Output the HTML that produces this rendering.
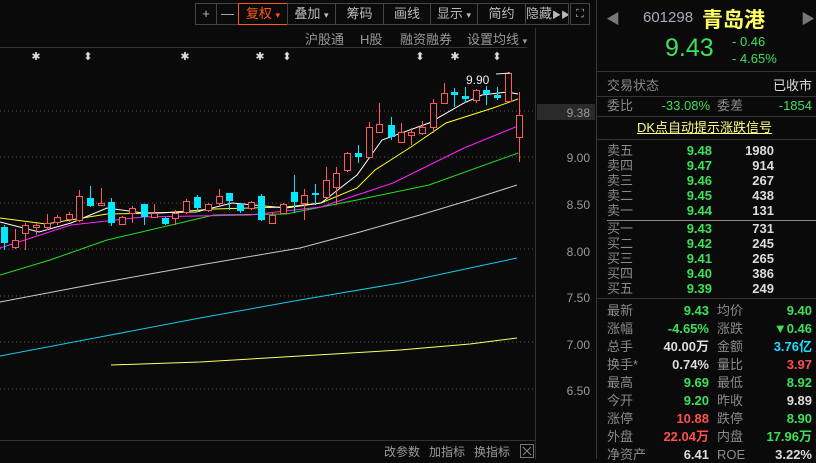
<!DOCTYPE html>
<html><head><meta charset="utf-8"><style>
*{margin:0;padding:0;box-sizing:border-box}
body{width:816px;height:459px;background:#0a0a0a;overflow:hidden;position:relative;font-family:"Liberation Sans","Noto Sans CJK SC",sans-serif;color:#bbb}
.a{position:absolute;white-space:nowrap}
.tb{position:absolute;top:3px;height:22px;border:1px solid #444;font-size:13px;color:#bbb;text-align:center;line-height:20px;white-space:nowrap;overflow:hidden}
.g{color:#3ee05a}.r{color:#ff4f4f}.w{color:#dcdcdc}.l{color:#8a8a8a}
.rp{font-size:13px;line-height:16px;height:16px}
</style></head><body>
<svg class="a" style="left:0;top:0" width="597" height="459">
<g stroke="#555" stroke-dasharray="1,3">
<line x1="0" y1="111" x2="535" y2="111"/><line x1="0" y1="157" x2="535" y2="157"/><line x1="0" y1="203" x2="535" y2="203"/><line x1="0" y1="249" x2="535" y2="249"/><line x1="0" y1="296" x2="535" y2="296"/><line x1="0" y1="342" x2="535" y2="342"/><line x1="0" y1="389" x2="535" y2="389"/>
</g>
<line x1="0" y1="47.5" x2="527" y2="47.5" stroke="#333"/>
<line x1="535.5" y1="28" x2="535.5" y2="459" stroke="#333"/>
<line x1="0" y1="440.5" x2="535" y2="440.5" stroke="#333"/>
<line x1="596.5" y1="0" x2="596.5" y2="459" stroke="#3a3a3a"/>
<rect x="537" y="104" width="58" height="16" fill="#2a2a2a"/>
<g fill="#9a9a9a" font-size="12" text-anchor="end" font-family="Liberation Sans">
<text x="590" y="117">9.38</text><text x="590" y="162">9.00</text><text x="590" y="209">8.50</text><text x="590" y="256">8.00</text><text x="590" y="302">7.50</text><text x="590" y="349">7.00</text><text x="590" y="395">6.50</text>
</g>
<g fill="#ddd" font-size="11" text-anchor="middle"><text x="36" y="60">✱</text><text x="88" y="60">⬍</text><text x="185" y="60">✱</text><text x="260" y="60">✱</text><text x="287" y="60">⬍</text><text x="420" y="60">⬍</text><text x="455" y="60">✱</text><text x="497" y="60">⬍</text></g>
<g fill="none" stroke-width="1">
<polyline stroke="#ffff6a" points="111,365 200,362 300,356 400,350 470,344 517,338"/>
<polyline stroke="#18c8e8" points="0,356 100,337 200,318 300,300 400,283 470,268 517,258"/>
<polyline stroke="#c8c8c8" points="0,302 100,283 200,265 300,248 360,232 420,215 470,200 517,185"/>
<polyline stroke="#22e022" points="0,275 50,260 107,240 214,215 286,214 357,200 429,185 518,153"/>
<polyline stroke="#ff22ff" points="0,248 71,225 143,217 250,215 321,207 393,183 464,148 518,126"/>
<polyline stroke="#ffff22" points="0,218 46,224 107,214 161,213 214,209 286,207 321,203 357,188 375,170 411,147 446,123 493,108 518,99"/>
<polyline stroke="#ffffff" points="0,222 39,232 71,223 107,208 143,213 196,212 232,203 286,208 321,203 357,175 382,140 429,123 464,103 482,95 507,92 518,94"/>
</g>
<g id="c" stroke-width="1">
</g>
<text x="466" y="84" fill="#eee" font-size="12">9.90</text>
<line x1="496" y1="74" x2="510" y2="73" stroke="#eee"/>
<g font-size="12" fill="#9a9a9a"><text x="384" y="456">改参数</text><text x="429" y="456">加指标</text><text x="474" y="456">换指标</text></g>
<rect x="520.5" y="444.5" width="13" height="13" fill="none" stroke="#777"/>
<path d="M523 447l8 8M531 447l-8 8" stroke="#888"/>
</svg>
<script>
var d=[[4,'c',227,243,225,250],[15,'r',240,247,229,249],[25,'r',225,233,223,250],[36,'r',225,227,223,235],[47,'r',223,227,214,230],[57,'r',217,222,215,225],[69,'r',214,219,212,222],[79,'r',196,220,190,222],[90,'c',198,206,186,207],[101,'r',203,205,188,205],[111,'c',202,223,198,226],[122,'r',217,224,216,225],[132,'r',208,213,206,223],[144,'c',204,217,204,225],[154,'r',213,217,204,217],[165,'c',218,224,217,225],[175,'r',213,218,210,225],[186,'r',201,212,199,214],[197,'c',197,208,195,212],[208,'r',204,210,203,212],[219,'r',196,203,189,206],[229,'c',193,201,193,210],[240,'c',204,211,203,213],[251,'r',202,208,201,210],[261,'c',196,220,194,221],[272,'r',215,223,213,224],[283,'r',204,213,203,214],[294,'c',192,202,175,213],[304,'r',195,203,189,220],[315,'c',193,195,184,205],[326,'r',180,197,167,198],[336,'r',173,187,167,205],[347,'r',153,170,152,172],[358,'c',153,157,145,163],[369,'r',127,157,122,158],[379,'r',124,132,103,133],[391,'c',125,137,117,140],[401,'r',132,142,123,143],[411,'r',132,135,128,145],[422,'r',127,133,121,135],[433,'r',103,127,99,133],[444,'r',93,103,83,104],[454,'c',92,95,88,107],[465,'c',96,99,87,103],[476,'r',90,100,89,103],[486,'c',90,94,86,105],[497,'c',95,98,87,100],[508,'r',73,101,72,102],[519,'r',115,137,92,162]];
var s='';d.forEach(function(k){var x=k[0],col=k[1]=='r'?'#ff5a5a':'#00e8ff';
s+='<line x1="'+(x+.5)+'" y1="'+k[4]+'" x2="'+(x+.5)+'" y2="'+k[5]+'" stroke="'+col+'"/>';
if(k[1]=='r')s+='<rect x="'+(x-2.5)+'" y="'+(k[2]+.5)+'" width="6" height="'+Math.max(1,k[3]-k[2])+'" fill="#0a0a0a" stroke="'+col+'"/>';
else s+='<rect x="'+(x-3)+'" y="'+k[2]+'" width="7" height="'+Math.max(2,k[3]-k[2])+'" fill="'+col+'"/>';});
document.getElementById('c').innerHTML=s;
</script>
<div class="tb" style="left:195px;width:22px">+</div>
<div class="tb" style="left:216px;width:23px">—</div>
<div class="tb" style="left:238px;width:50px;border-color:#ff5a14;color:#ff5a14">复权 <span style="font-size:9px">▾</span></div>
<div class="tb" style="left:287px;width:49px">叠加 <span style="font-size:9px">▾</span></div>
<div class="tb" style="left:335px;width:49px">筹码</div>
<div class="tb" style="left:383px;width:48px">画线</div>
<div class="tb" style="left:430px;width:48px">显示 <span style="font-size:9px">▾</span></div>
<div class="tb" style="left:477px;width:49px">简约</div>
<div class="tb" style="left:525px;width:44px">隐藏<span style="font-size:9px">▶▶</span></div>
<div class="tb" style="left:570px;width:20px;font-size:11px">⛶</div>
<div class="a" style="left:305px;top:29px;font-size:13px;color:#999">沪股通</div>
<div class="a" style="left:360px;top:29px;font-size:13px;color:#999">H股</div>
<div class="a" style="left:400px;top:29px;font-size:13px;color:#999">融资融券</div>
<div class="a" style="left:467px;top:29px;font-size:13px;color:#999">设置均线 <span style="font-size:9px">▾</span></div>
<div class="a" style="left:606px;top:9px;font-size:14px;color:#777">◀</div>
<div class="a" style="left:801px;top:9px;font-size:14px;color:#777">▶</div>
<div class="a" style="left:643px;top:9px;font-size:15px;color:#aab">601298</div>
<div class="a" style="left:702px;top:4px;font-size:21px;color:#ffff66;font-weight:bold">青岛港</div>
<div class="a g" style="left:665px;top:34px;font-size:25px">9.43</div>
<div class="a g" style="left:732px;top:34px;font-size:13px">- 0.46</div>
<div class="a g" style="left:732px;top:51px;font-size:13px">- 4.65%</div>
<div class="a" style="left:597px;top:71px;width:219px;border-top:1px solid #333"></div>
<div class="a rp l" style="left:607px;top:78px">交易状态</div>
<div class="a rp w" style="right:4px;top:78px">已收市</div>
<div class="a" style="left:597px;top:96px;width:219px;border-top:1px solid #333"></div>
<div class="a rp l" style="left:607px;top:98px">委比</div>
<div class="a rp g" style="right:106px;top:98px">-33.08%</div>
<div class="a rp l" style="left:717px;top:98px">委差</div>
<div class="a rp g" style="right:4px;top:98px">-1854</div>
<div class="a" style="left:597px;top:116px;width:219px;border-top:1px solid #333"></div>
<div class="a rp" style="left:637px;top:120px;color:#ffff88;text-decoration:underline">DK点自动提示涨跌信号</div>
<div class="a" style="left:597px;top:139px;width:219px;border-top:1px solid #333"></div>
<div class="a" style="left:607px;top:220px;width:209px;border-top:1px solid #888"></div>
<div class="a" style="left:597px;top:298px;width:219px;border-top:1px solid #333"></div>
<div id="ob"></div>
<script>
var ob=[['卖五','9.48','1980'],['卖四','9.47','914'],['卖三','9.46','267'],['卖二','9.45','438'],['卖一','9.44','131'],['买一','9.43','731'],['买二','9.42','245'],['买三','9.41','265'],['买四','9.40','386'],['买五','9.39','249']];
var h='';ob.forEach(function(o,i){var y=143+i*15+(i>4?3:0);
h+='<div class="a rp l" style="left:607px;top:'+y+'px">'+o[0]+'</div><div class="a rp g" style="right:104px;top:'+y+'px;font-weight:bold">'+o[1]+'</div><div class="a rp w" style="right:42px;top:'+y+'px;font-weight:bold">'+o[2]+'</div>';});
var st=[['最新','9.43','g','均价','9.40','g'],['涨幅','-4.65%','g','涨跌','▼0.46','g'],['总手','40.00万','w','金额','3.76亿','c'],['换手*','0.74%','w','量比','3.97','r'],['最高','9.69','g','最低','8.92','g'],['今开','9.20','g','昨收','9.89','w'],['涨停','10.88','r','跌停','8.90','g'],['外盘','22.04万','r','内盘','17.96万','g'],['净资产','6.41','w','ROE','3.22%','w']];
st.forEach(function(o,i){var y=303+i*18;function c(k){return k=='c'?'style="color:#22ddff;':'class="a rp '+k+'" style="'}
h+='<div class="a rp l" style="left:607px;top:'+y+'px">'+o[0]+'</div><div '+(o[2]=='c'?'class="a rp" ':'')+c(o[2])+'right:107px;top:'+y+'px;font-weight:bold">'+o[1]+'</div><div class="a rp l" style="left:717px;top:'+y+'px">'+o[3]+'</div><div '+(o[5]=='c'?'class="a rp" ':'')+c(o[5])+'right:4px;top:'+y+'px;font-weight:bold">'+o[4]+'</div>';});
document.getElementById('ob').innerHTML=h;
</script>
</body></html>
